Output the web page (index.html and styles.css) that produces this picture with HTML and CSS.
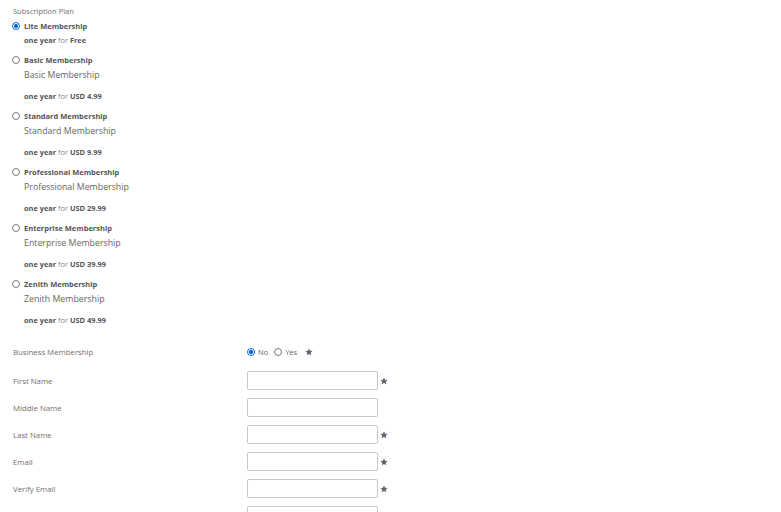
FILE: index.html
```html
<!DOCTYPE html>
<html lang="en">
<head>
  <meta charset="UTF-8" />
  <meta name="viewport" content="width=device-width, initial-scale=1.0" />
  <title>Membership Signup</title>
  <link rel="stylesheet" href="styles.css">
</head>
<body>

<div class="page">
  <div class="section-label">Subscription Plan</div>

  <div class="plans">
    <label class="plan">
      <input type="radio" name="plan" value="lite" checked>
      <span class="plan-body">
        <span class="plan-title">Lite Membership</span>
        <span class="plan-price"><b>one year</b> for <b>Free</b></span>
      </span>
    </label>
    <label class="plan">
      <input type="radio" name="plan" value="basic">
      <span class="plan-body">
        <span class="plan-title">Basic Membership</span>
        <span class="plan-name">Basic Membership</span>
        <span class="plan-price"><b>one year</b> for <b>USD 4.99</b></span>
      </span>
    </label>
    <label class="plan">
      <input type="radio" name="plan" value="standard">
      <span class="plan-body">
        <span class="plan-title">Standard Membership</span>
        <span class="plan-name">Standard Membership</span>
        <span class="plan-price"><b>one year</b> for <b>USD 9.99</b></span>
      </span>
    </label>
    <label class="plan">
      <input type="radio" name="plan" value="professional">
      <span class="plan-body">
        <span class="plan-title">Professional Membership</span>
        <span class="plan-name">Professional Membership</span>
        <span class="plan-price"><b>one year</b> for <b>USD 29.99</b></span>
      </span>
    </label>
    <label class="plan">
      <input type="radio" name="plan" value="enterprise">
      <span class="plan-body">
        <span class="plan-title">Enterprise Membership</span>
        <span class="plan-name">Enterprise Membership</span>
        <span class="plan-price"><b>one year</b> for <b>USD 39.99</b></span>
      </span>
    </label>
    <label class="plan">
      <input type="radio" name="plan" value="zenith">
      <span class="plan-body">
        <span class="plan-title">Zenith Membership</span>
        <span class="plan-name">Zenith Membership</span>
        <span class="plan-price"><b>one year</b> for <b>USD 49.99</b></span>
      </span>
    </label>
  </div>

  <form class="fields">
    <div class="field field-choice">
      <span class="field-label">Business Membership</span>
      <div class="field-control">
        <label class="choice"><input type="radio" name="business" value="no" checked> No</label>
        <label class="choice"><input type="radio" name="business" value="yes"> Yes</label>
        <svg class="req req-choice" viewBox="0 0 10 10"><path d="M5 .6l1.35 2.9 3.15.35-2.35 2.15.65 3.1L5 7.5 2.2 9.1l.65-3.1L.5 3.85l3.15-.35z"/></svg>
      </div>
    </div>
    <div class="field">
      <label class="field-label" for="firstName">First Name</label>
      <div class="field-control">
        <input type="text" id="firstName">
        <svg class="req" viewBox="0 0 10 10"><path d="M5 .6l1.35 2.9 3.15.35-2.35 2.15.65 3.1L5 7.5 2.2 9.1l.65-3.1L.5 3.85l3.15-.35z"/></svg>
      </div>
    </div>
    <div class="field">
      <label class="field-label" for="middleName">Middle Name</label>
      <div class="field-control">
        <input type="text" id="middleName">
      </div>
    </div>
    <div class="field">
      <label class="field-label" for="lastName">Last Name</label>
      <div class="field-control">
        <input type="text" id="lastName">
        <svg class="req" viewBox="0 0 10 10"><path d="M5 .6l1.35 2.9 3.15.35-2.35 2.15.65 3.1L5 7.5 2.2 9.1l.65-3.1L.5 3.85l3.15-.35z"/></svg>
      </div>
    </div>
    <div class="field">
      <label class="field-label" for="email">Email</label>
      <div class="field-control">
        <input type="text" id="email">
        <svg class="req" viewBox="0 0 10 10"><path d="M5 .6l1.35 2.9 3.15.35-2.35 2.15.65 3.1L5 7.5 2.2 9.1l.65-3.1L.5 3.85l3.15-.35z"/></svg>
      </div>
    </div>
    <div class="field">
      <label class="field-label" for="verifyEmail">Verify Email</label>
      <div class="field-control">
        <input type="text" id="verifyEmail">
        <svg class="req" viewBox="0 0 10 10"><path d="M5 .6l1.35 2.9 3.15.35-2.35 2.15.65 3.1L5 7.5 2.2 9.1l.65-3.1L.5 3.85l3.15-.35z"/></svg>
      </div>
    </div>
    <div class="field">
      <span class="field-label"></span>
      <div class="field-control">
        <input type="password" id="password" aria-label="Password">
        <svg class="req" viewBox="0 0 10 10"><path d="M5 .6l1.35 2.9 3.15.35-2.35 2.15.65 3.1L5 7.5 2.2 9.1l.65-3.1L.5 3.85l3.15-.35z"/></svg>
      </div>
    </div>
  </form>
</div>

</body>
</html>
```

FILE: styles.css
```css
html, body {
  margin: 0;
  padding: 0;
  background: #fff;
  font-family: "Open Sans", Arial, sans-serif;
}
.page {
  padding: 4px 13px 0 13px;
}
.section-label {
  font-size: 7.5px;
  line-height: 14px;
  color: #776b6b;
  margin-bottom: 1px;
}
.plans {
  display: flex;
  flex-direction: column;
  gap: 6px;
}
.plan {
  display: flex;
  align-items: flex-start;
  gap: 4px;
  margin-left: -1px;
}
.plan-body {
  display: flex;
  flex-direction: column;
}
.plan-title {
  font-size: 7.5px;
  font-weight: bold;
  line-height: 14px;
  color: #555;
}
.plan-name {
  font-size: 8.8px;
  line-height: 16px;
  color: #666;
  margin-bottom: 6px;
}
.plan-price {
  font-size: 7.4px;
  line-height: 14px;
  color: #888;
}
.plan-price b {
  color: #555;
}

/* radios */
input[type=radio] {
  appearance: none;
  -webkit-appearance: none;
  margin: 0;
  width: 8px;
  height: 8px;
  border: 1px solid #767676;
  border-radius: 50%;
  box-sizing: border-box;
  background: #fff;
  flex: none;
}
.plan input[type=radio] {
  margin-top: 3px;
}
input[type=radio]:checked {
  border-color: #0b67d6;
  background: radial-gradient(circle, #0b67d6 0 2px, #fff 2.2px);
}

/* fields */
.fields {
  margin: 10px 0 0 0;
}
.field {
  display: grid;
  grid-template-columns: 234px auto;
  align-items: center;
  height: 27px;
}
.field-choice {
  height: 30px;
}
.field-label {
  font-size: 7.8px;
  color: #776b6b;
}
.field-control {
  display: flex;
  align-items: center;
}
.field-control input[type=text],
.field-control input[type=password] {
  width: 131px;
  height: 19px;
  box-sizing: border-box;
  border: 1px solid #c8c8cc;
  border-radius: 2px;
  padding: 2px 4px;
  margin: 0;
}
.choice {
  display: flex;
  align-items: center;
  gap: 3px;
  font-size: 7.5px;
  color: #666;
  margin-right: 6px;
}
.req {
  width: 8px;
  height: 8px;
  fill: #5f6672;
  margin-left: 2px;
}
.req-choice {
  margin-left: 2px;
}
```
